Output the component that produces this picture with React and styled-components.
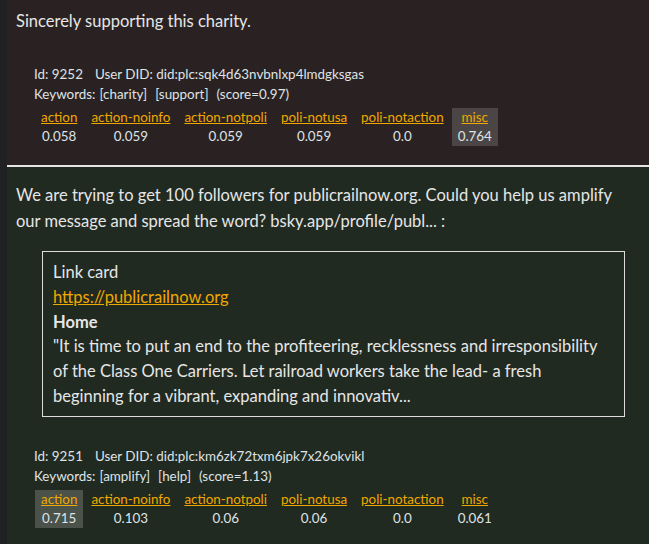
import React from 'react'
import styled, { createGlobalStyle } from 'styled-components'

const GlobalStyle = createGlobalStyle`
  html, body {
    margin: 0;
    padding: 0;
    background: #1f2123;
  }
  body {
    font-family: Lato, "Open Sans", sans-serif;
    color: #e3e3e3;
  }
`

const Feed = styled.div`
  margin-left: 7px;
  height: 544px;
  overflow: hidden;
`

const Post = styled.section`
  background: ${p => p.$tone === 'green' ? '#212a21' : '#2a2222'};
  border-top: ${p => p.$divider ? '2px solid #e4e4e4' : 'none'};
  padding: ${p => p.$divider ? '15px' : '8px'} 9px 19px 9px;
`

const PostText = styled.p`
  margin: 0;
  font-size: 16.5px;
  line-height: 26px;
  color: #e6e6e6;
`

const LinkCard = styled.div`
  margin: 17px 15px 0 26px;
  border: 1px solid #dcdcdc;
  padding: 8px 10px 7px 10px;
  font-size: 16.5px;
  line-height: 24.8px;
  color: #e6e6e6;
`

const CardLink = styled.a`
  display: block;
  width: fit-content;
  color: #f0a800;
  text-decoration: underline;
`

const CardTitle = styled.div`
  font-weight: 700;
`

const Meta = styled.div`
  margin-top: ${p => p.$gap}px;
  padding-left: 18px;
  font-size: 13.4px;
  line-height: 20px;
  color: #dfe3e6;
`

const MetaLine = styled.div`
  display: flex;
  gap: ${p => p.$gap || 8}px;
`

const MetaKey = styled.span`
  margin-right: -4px;
`

const Scores = styled.table`
  border-collapse: separate;
  border-spacing: 2px 0;
  margin: 4px 0 0 -1px;
  font-size: 13.4px;
`

const Cell = styled.td`
  padding: 0 6px;
  height: 19px;
  line-height: 19px;
  text-align: center;
  background: ${p => p.$top ? p.$hl : 'transparent'};
`

const Label = styled.a`
  color: #f0a800;
  text-decoration: underline;
`

const labels = ['action', 'action-noinfo', 'action-notpoli', 'poli-notusa', 'poli-notaction', 'misc']

function ScoreTable({ values, hl }) {
  const nums = values.map(Number)
  const top = nums.indexOf(Math.max(...nums))
  return (
    <Scores>
      <tbody>
        <tr>
          {labels.map((l, i) => (
            <Cell key={l} $top={i === top} $hl={hl}><Label>{l}</Label></Cell>
          ))}
        </tr>
        <tr>
          {values.map((v, i) => (
            <Cell key={i} $top={i === top} $hl={hl}>{v}</Cell>
          ))}
        </tr>
      </tbody>
    </Scores>
  )
}

function PostMeta({ id, did, keywords, score, values, hl, gap }) {
  return (
    <Meta $gap={gap}>
      <MetaLine $gap={12}>
        <span>Id: {id}</span>
        <span>User DID: {did}</span>
      </MetaLine>
      <MetaLine>
        <MetaKey>Keywords:</MetaKey>
        {keywords.map(k => <span key={k}>[{k}]</span>)}
        <span>(score={score})</span>
      </MetaLine>
      <ScoreTable values={values} hl={hl} />
    </Meta>
  )
}

export default function App() {
  return (
    <>
      <GlobalStyle />
      <Feed>
        <Post>
          <PostText>Sincerely supporting this charity.</PostText>
          <PostMeta
            gap={30}
            id="9252"
            did="did:plc:sqk4d63nvbnlxp4lmdgksgas"
            keywords={['charity', 'support']}
            score="0.97"
            values={['0.058', '0.059', '0.059', '0.059', '0.0', '0.764']}
            hl="#4b4545"
          />
        </Post>
        <Post $tone="green" $divider>
          <PostText>
            We are trying to get 100 followers for publicrailnow.org. Could you help us amplify our message and spread the word? bsky.app/profile/publ... :
          </PostText>
          <LinkCard>
            <div>Link card</div>
            <CardLink>https://publicrailnow.org</CardLink>
            <CardTitle>Home</CardTitle>
            <div>
              "It is time to put an end to the profiteering, recklessness and irresponsibility of the Class One Carriers. Let railroad workers take the lead- a fresh beginning for a vibrant, expanding and innovativ...
            </div>
          </LinkCard>
          <PostMeta
            gap={29}
            id="9251"
            did="did:plc:km6zk72txm6jpk7x26okvikl"
            keywords={['amplify', 'help']}
            score="1.13"
            values={['0.715', '0.103', '0.06', '0.06', '0.0', '0.061']}
            hl="#4a5249"
          />
        </Post>
      </Feed>
    </>
  )
}
